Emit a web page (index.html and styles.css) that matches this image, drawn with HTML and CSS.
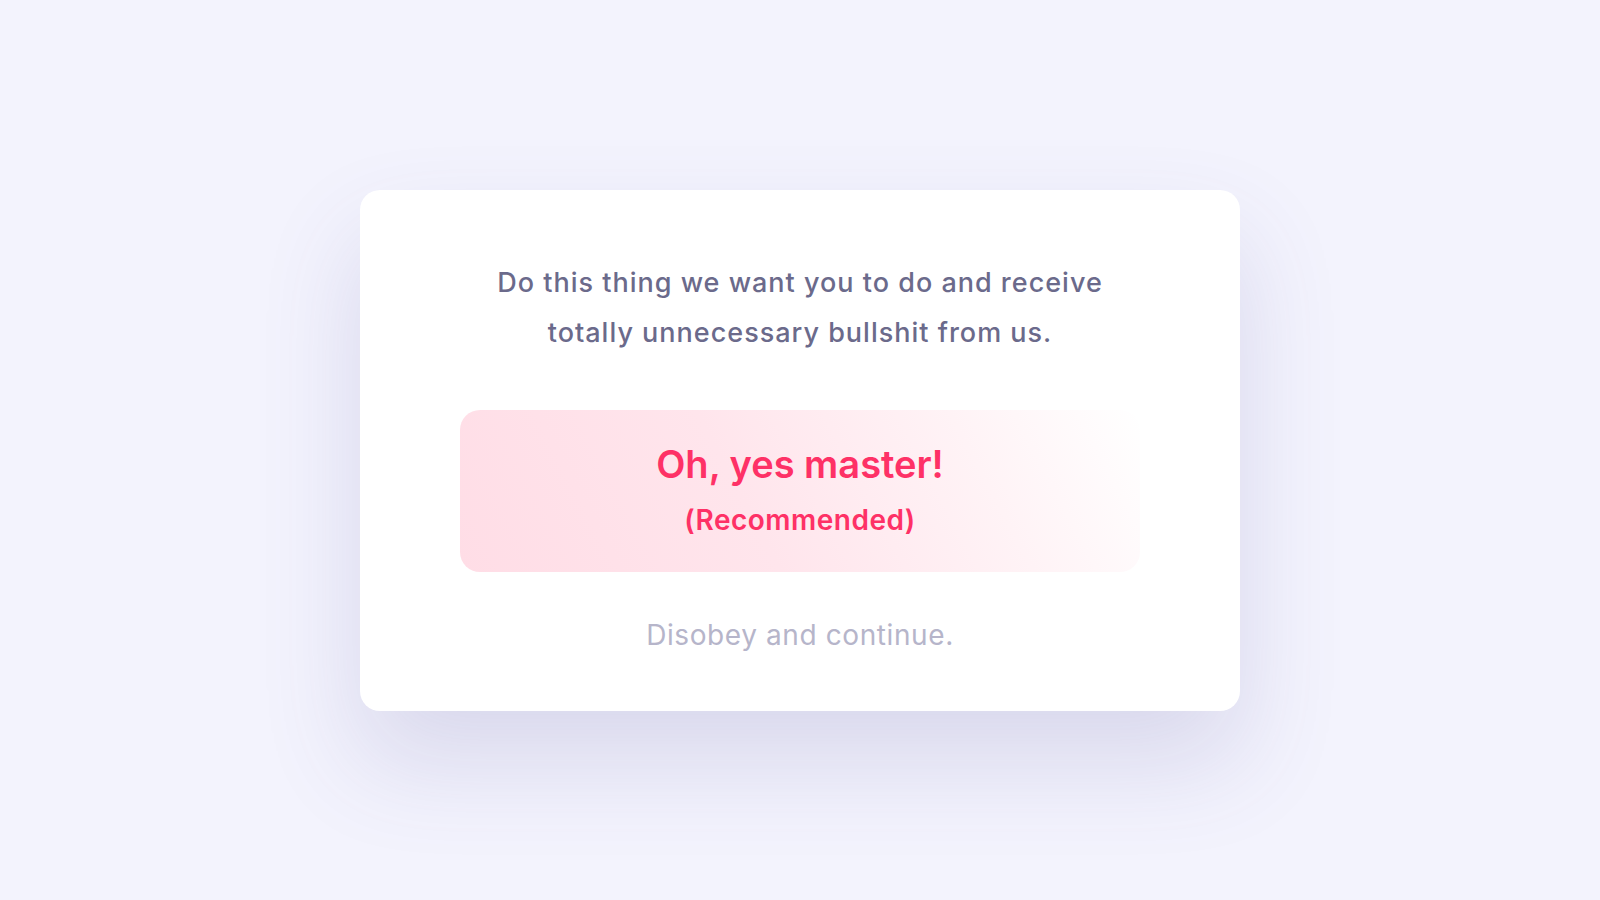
FILE: index.html
```html
<!DOCTYPE html>
<html lang="en">
<head>
  <meta charset="UTF-8">
  <meta name="viewport" content="width=device-width, initial-scale=1.0">
  <title>Consent</title>
  <link rel="stylesheet" href="styles.css">
</head>
<body>
  <main class="dialog">
    <p class="dialog-text">Do this thing we want you to do and receive<br>totally unnecessary bullshit from us.</p>

    <button class="accept">
      <span class="accept-title">Oh, yes master!</span>
      <span class="accept-note">(Recommended)</span>
    </button>

    <a class="decline" href="#">Disobey and continue.</a>
  </main>
</body>
</html>
```

FILE: styles.css
```css
/* Basic reset */
* {
  margin: 0;
  padding: 0;
  box-sizing: border-box;
}

body {
  font-family: Inter, "Open Sans", sans-serif;
  background-color: #f3f3fd;
  height: 100vh;
  display: flex;
  align-items: center;
  justify-content: center;
}

.dialog {
  width: 880px;
  padding: 68px 100px 56px;
  background-color: white;
  border-radius: 20px;
  box-shadow: 0 50px 100px rgba(80, 72, 150, 0.16);
  display: flex;
  flex-direction: column;
  align-items: center;
  text-align: center;
}

.dialog-text {
  font-size: 27px;
  font-weight: 500;
  line-height: 50px;
  letter-spacing: 1px;
  color: #6b6a8b;
}

.accept {
  width: 100%;
  height: 162px;
  margin-top: 52px;
  padding: 30px 0 32px;
  border: none;
  border-radius: 20px;
  background: linear-gradient(62deg, #ffdde6 0%, #ffe5ec 42%, #fff3f6 75%, #ffffff 100%);
  font-family: inherit;
  color: #fe3166;
  cursor: pointer;
  display: flex;
  flex-direction: column;
  align-items: center;
  gap: 12px;
}

.accept-title {
  font-size: 38px;
  font-weight: 600;
  line-height: 48px;
}

.accept-note {
  font-size: 28px;
  font-weight: 600;
  line-height: 40px;
  letter-spacing: 0.5px;
}

.decline {
  margin-top: 43px;
  font-size: 28px;
  line-height: 40px;
  letter-spacing: 0.6px;
  color: #b6b5ca;
  text-decoration: none;
}
```
